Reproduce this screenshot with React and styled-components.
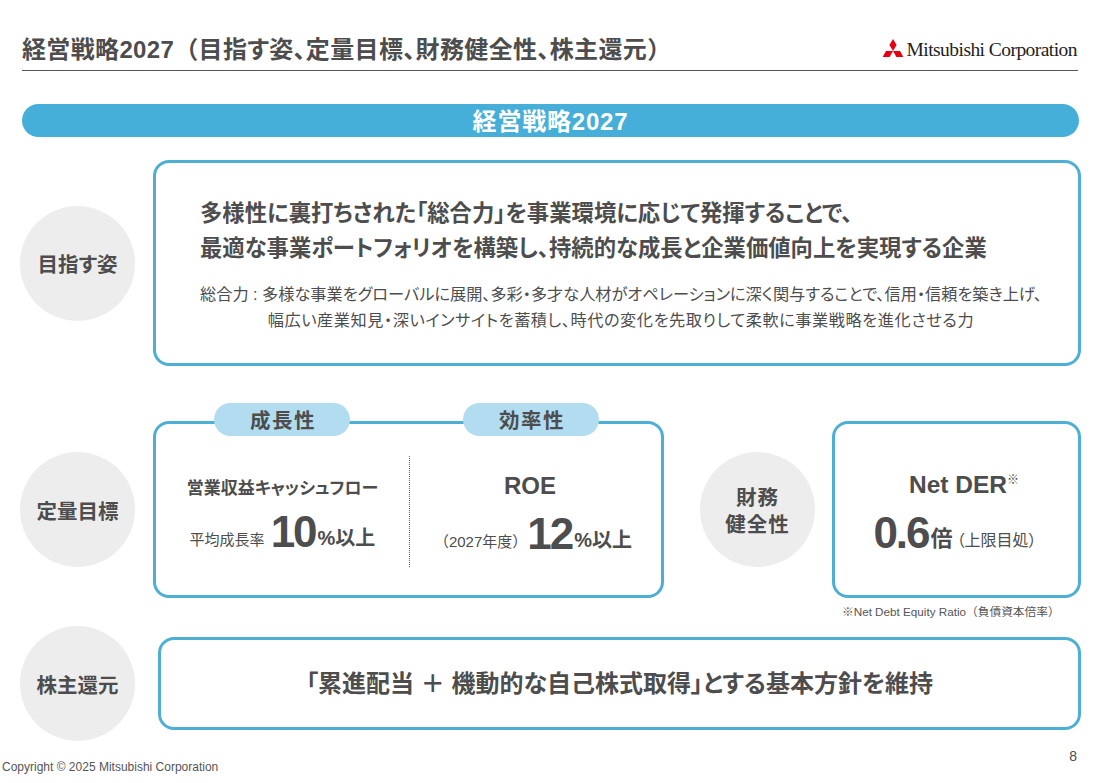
import React from 'react'
import styled, { createGlobalStyle } from 'styled-components'

const GlobalStyle = createGlobalStyle`
    html, body { margin: 0; padding: 0; background: #fff; }
    body {
        font-family: "Liberation Sans", "Noto Sans CJK JP", sans-serif;
        color: #4d4d4d;
    }
`

const MitsubishiMark = () => (
    <svg width="22" height="20" viewBox="-11 -12 22 20">
        {[0, 120, 240].map(angle => (
            <polygon key={angle} points="0,0 3.6,-6 0,-12 -3.6,-6" fill="#e60012" transform={`rotate(${angle})`} />
        ))}
    </svg>
)

const App = () => {
    return (
        <Page>
            <GlobalStyle />
            <Header>
                <Title>経営戦略2027<Bracket>（</Bracket>目指す姿、定量目標、財務健全性、株主還元<Bracket>）</Bracket></Title>
                <Logo>
                    <MitsubishiMark />
                    <LogoText>Mitsubishi Corporation</LogoText>
                </Logo>
            </Header>
            <Banner>経営戦略2027</Banner>

            <VisionRow>
                <Circle>目指す姿</Circle>
                <VisionBox>
                    <Lead>
                        多様性に裏打ちされた「総合力」を事業環境に応じて発揮することで、<br />
                        最適な事業ポートフォリオを構築し、持続的な成長と企業価値向上を実現する企業
                    </Lead>
                    <Note>
                        <NoteLine>総合力 : 多様な事業をグローバルに展開、多彩・多才な人材がオペレーションに深く関与することで、信用・信頼を築き上げ、</NoteLine>
                        <NoteLine $spacing={0.55}>幅広い産業知見・深いインサイトを蓄積し、時代の変化を先取りして柔軟に事業戦略を進化させる力</NoteLine>
                    </Note>
                </VisionBox>
            </VisionRow>

            <TargetRow>
                <Circle>定量目標</Circle>
                <TargetBox>
                    <Pill $left={58}>成長性</Pill>
                    <Pill $left={307}>効率性</Pill>
                    <Metric>
                        <MetricName $size={17}>営業収益キャッシュフロー</MetricName>
                        <MetricValue $top={4}>
                            <Small $gap={6}>平均成長率</Small>
                            <Big>10</Big>
                            <Unit>%以上</Unit>
                        </MetricValue>
                    </Metric>
                    <Divider />
                    <Metric>
                        <MetricName $size={24} $offset={11}>ROE</MetricName>
                        <MetricValue $top={6} $right={5}>
                            <Small $gap={0}><Bracket>（</Bracket>2027年度<Bracket>）</Bracket></Small>
                            <Big>12</Big>
                            <Unit>%以上</Unit>
                        </MetricValue>
                    </Metric>
                </TargetBox>
                <HealthCircle>財務<br />健全性</HealthCircle>
                <HealthColumn>
                    <HealthBox>
                        <DerName>Net DER<Sup>※</Sup></DerName>
                        <MetricValue $top={6} $right={3}>
                            <Big>0.6</Big>
                            <Unit $size={22}>倍</Unit>
                            <Limit>（上限目処）</Limit>
                        </MetricValue>
                    </HealthBox>
                    <Footnote>※Net Debt Equity Ratio<Bracket>（</Bracket>負債資本倍率<Bracket>）</Bracket></Footnote>
                </HealthColumn>
            </TargetRow>

            <ReturnRow>
                <Circle>株主還元</Circle>
                <ReturnBox>「累進配当 ＋ 機動的な自己株式取得」とする基本方針を維持</ReturnBox>
            </ReturnRow>

            <Footer>
                <Copyright>Copyright © 2025 Mitsubishi Corporation</Copyright>
                <PageNumber>8</PageNumber>
            </Footer>
        </Page>
    )
}

export default App


const Page = styled.div`
    width: 1108px;
    height: 783px;
    display: flex;
    flex-direction: column;
    overflow: hidden;
    font-feature-settings: "palt";
`
const Bracket = styled.span`
    font-feature-settings: normal;
`
const Header = styled.header`
    height: 71px;
    margin: 0 30px 0 22px;
    display: flex;
    justify-content: space-between;
    align-items: center;
    padding-top: 24px;
    box-sizing: border-box;
    border-bottom: 1px solid #555;
`
const Title = styled.h1`
    margin: 0;
    font-size: 24px;
    font-weight: 700;
    letter-spacing: 0.35px;
    white-space: nowrap;
`
const Logo = styled.div`
    display: flex;
    align-items: center;
    gap: 3px;
    margin-top: 3px;
    margin-right: 1px;
    color: #222;
`
const LogoText = styled.span`
    font-family: "Liberation Serif", serif;
    font-size: 19.5px;
    letter-spacing: -0.55px;
    white-space: nowrap;
    padding-top: 3px;
`
const Banner = styled.div`
    height: 33px;
    margin: 33px 29px 0 22px;
    padding-bottom: 3px;
    box-sizing: border-box;
    display: flex;
    align-items: center;
    justify-content: center;
    border-radius: 17px;
    background: #46afd9;
    color: #fff;
    font-size: 24px;
    font-weight: 700;
    letter-spacing: 0.8px;
`
const Row = styled.section`
    display: flex;
    align-items: center;
    padding-left: 20px;
`
const VisionRow = styled(Row)`
    margin-top: 23px;
    height: 206px;
`
const TargetRow = styled(Row)`
    margin-top: 55px;
    align-items: flex-start;
`
const ReturnRow = styled(Row)`
    margin-top: 8px;
`
const Circle = styled.div`
    width: 115px;
    height: 115px;
    flex: none;
    box-sizing: border-box;
    padding-top: 3px;
    display: flex;
    align-items: center;
    justify-content: center;
    text-align: center;
    border-radius: 50%;
    background: #ededed;
    font-size: 20.5px;
    font-weight: 700;
    line-height: 27px;
    ${TargetRow} > & { margin-top: 31px; }
`
const HealthCircle = styled(Circle)`
    margin-left: 36px;
    letter-spacing: 1px;
`
const Box = styled.div`
    box-sizing: border-box;
    border: 3px solid #4dafd5;
    border-radius: 16px;
    background: #fff;
`
const VisionBox = styled(Box)`
    width: 928px;
    height: 206px;
    margin-left: 18px;
    padding: 33px 0 0 44px;
`
const Lead = styled.p`
    margin: 0;
    font-size: 22.35px;
    font-weight: 700;
    line-height: 35px;
    white-space: nowrap;
`
const Note = styled.div`
    margin: 15px 0 0 -44px;
    padding-left: 8px;
    font-size: 16.2px;
    line-height: 26px;
    text-align: center;
    white-space: nowrap;
`
const NoteLine = styled.div`
    letter-spacing: ${({ $spacing }) => $spacing || 0}px;
`
const TargetBox = styled(Box)`
    position: relative;
    width: 511px;
    height: 177px;
    margin-left: 18px;
    padding: 32px 0 28px;
    display: grid;
    grid-template-columns: 253px 1px 1fr;
    flex: none;
`
const Pill = styled.div`
    position: absolute;
    top: -21px;
    left: ${({ $left }) => $left}px;
    width: 136px;
    height: 33px;
    padding: 0 0 1px 2px;
    box-sizing: border-box;
    display: flex;
    align-items: center;
    justify-content: center;
    border-radius: 17px;
    background: #b2dcf0;
    font-size: 20.5px;
    font-weight: 700;
    letter-spacing: 1.5px;
`
const Metric = styled.div`
    display: flex;
    flex-direction: column;
    align-items: center;
    padding-top: 13px;
`
const MetricName = styled.div`
    height: 34px;
    display: flex;
    align-items: center;
    margin-right: ${({ $offset }) => $offset || 0}px;
    font-size: ${({ $size }) => $size}px;
    font-weight: 700;
    white-space: nowrap;
`
const MetricValue = styled.div`
    margin-top: ${({ $top }) => $top}px;
    margin-right: ${({ $right }) => $right || 0}px;
    line-height: 50px;
    white-space: nowrap;
`
const Small = styled.span`
    font-size: 15px;
    margin-right: ${({ $gap }) => $gap}px;
    vertical-align: 2px;
`
const Big = styled.span`
    font-size: 44px;
    font-weight: 700;
    letter-spacing: -2px;
    margin-right: 2px;
`
const Unit = styled.span`
    font-size: ${({ $size }) => $size || 20}px;
    font-weight: 700;
    vertical-align: 2px;
`
const Divider = styled.div`
    height: 111px;
    border-left: 1px dotted #666;
`
const HealthColumn = styled.div`
    margin-left: 17px;
    width: 249px;
`
const HealthBox = styled(Box)`
    width: 249px;
    height: 177px;
    padding-top: 44px;
    display: flex;
    flex-direction: column;
    align-items: center;
`
const DerName = styled.div`
    margin-left: 15px;
    font-size: 24.5px;
    font-weight: 700;
    line-height: 34px;
`
const Sup = styled.sup`
    font-size: 12px;
    font-weight: 400;
    line-height: 0;
`
const Limit = styled.span`
    margin-left: 4px;
    font-size: 16px;
    vertical-align: 2px;
`
const Footnote = styled.div`
    margin-top: 7px;
    padding-left: 10px;
    font-size: 11.7px;
    line-height: 13px;
    white-space: nowrap;
    color: #555;
`
const ReturnBox = styled(Box)`
    width: 923px;
    height: 93px;
    margin-left: 23px;
    padding-bottom: 4px;
    display: flex;
    align-items: center;
    justify-content: center;
    font-size: 24px;
    font-weight: 700;
`
const Footer = styled.footer`
    display: flex;
    justify-content: space-between;
    align-items: flex-end;
    margin: 7px 0 0;
    padding: 0 31px 0 2px;
    height: 26px;
`
const Copyright = styled.span`
    font-size: 12px;
    line-height: 13px;
    color: #555;
`
const PageNumber = styled.span`
    font-size: 14px;
    line-height: 14px;
    margin-bottom: 11px;
`
